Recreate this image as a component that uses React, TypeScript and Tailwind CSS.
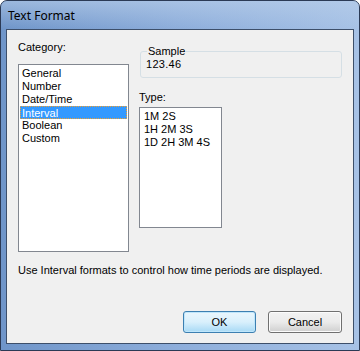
import React from 'react';

const CATEGORIES = ['General', 'Number', 'Date/Time', 'Interval', 'Boolean', 'Custom'];
const TYPES = ['1M 2S', '1H 2M 3S', '1D 2H 3M 4S'];

const ui = { fontFamily: '"Liberation Sans", Arial, sans-serif' };

export default function App() {
  return (
    <div className="w-[360px] h-[351px] bg-white">
      {/* Window frame */}
      <div className="w-[360px] h-[351px] flex flex-col rounded-t-[7px] border border-[#2b3a55] bg-gradient-to-r from-[#6f95c9] via-[#8eaedb] to-[#a7c2e6] overflow-hidden">
        {/* Title bar */}
        <div className="h-[28px] shrink-0 flex items-center pl-[7px] bg-gradient-to-b from-[#b9cfea]/60 to-transparent">
          <span className="text-[12px] text-black leading-none mt-[1px]" style={{ fontFamily: '"Noto Sans", "Open Sans", sans-serif' }}>
            Text Format
          </span>
        </div>

        {/* Client area */}
        <div className="mx-[5px] mb-[6px] flex-1 border border-[#3d4f6a] bg-[#f0f0f0] text-[11px] text-black flex flex-col" style={ui}>
          <div className="flex pl-[11px] pt-[11px] gap-[10px]">
            {/* Category column */}
            <div className="flex flex-col w-[111px]">
              <span className="leading-[13px] mb-[10px]">Category:</span>
              <div className="h-[188px] border border-[#828790] bg-white p-[1px] pt-[2px]">
                {CATEGORIES.map((c) => (
                  <div
                    key={c}
                    className={
                      c === 'Interval'
                        ? 'h-[13px] leading-[12px] pl-[1px] bg-[#3399ff] text-white border border-dotted border-[#f0a030]'
                        : 'h-[13px] leading-[13px] pl-[2px]'
                    }
                  >
                    {c}
                  </div>
                ))}
              </div>
            </div>

            {/* Right column */}
            <div className="flex flex-col pt-[6px]">
              <fieldset className="w-[202px] h-[32px] ml-[1px] border border-[#d5dfe5] rounded-[3px] px-[6px] -mt-[1px]">
                <legend className="px-[1px] leading-[11px]">Sample</legend>
                <div className="-ml-[1px] leading-[13px] mt-[1px] tracking-[0.3px]">123.46</div>
              </fieldset>
              <span className="leading-[13px] mt-[13px]">Type:</span>
              <div className="mt-[3px] w-[83px] h-[121px] border border-[#828790] bg-white pt-[2px] pl-[4px]">
                {TYPES.map((t) => (
                  <div key={t} className="h-[13px] leading-[13px]">
                    {t}
                  </div>
                ))}
              </div>
            </div>
          </div>

          <p className="pl-[11px] mt-[12px] leading-[13px]">
            Use Interval formats to control how time periods are displayed.
          </p>

          <div className="mt-auto mb-[10px] flex justify-end gap-[12px] pr-[11px]">
            <button className="w-[73px] h-[22px] rounded-[3px] border border-[#3c7fb1] bg-gradient-to-b from-[#eaf6fd] via-[#d9f0fc] to-[#a7d9f5] shadow-[inset_0_0_0_1px_#bfe6fb] text-[11px] text-black">
              OK
            </button>
            <button className="w-[74px] h-[22px] rounded-[3px] border border-[#707070] bg-gradient-to-b from-[#f2f2f2] via-[#ebebeb] to-[#cfcfcf] shadow-[inset_0_0_0_1px_#fcfcfc] text-[11px] text-black">
              Cancel
            </button>
          </div>
        </div>
      </div>
    </div>
  );
}
